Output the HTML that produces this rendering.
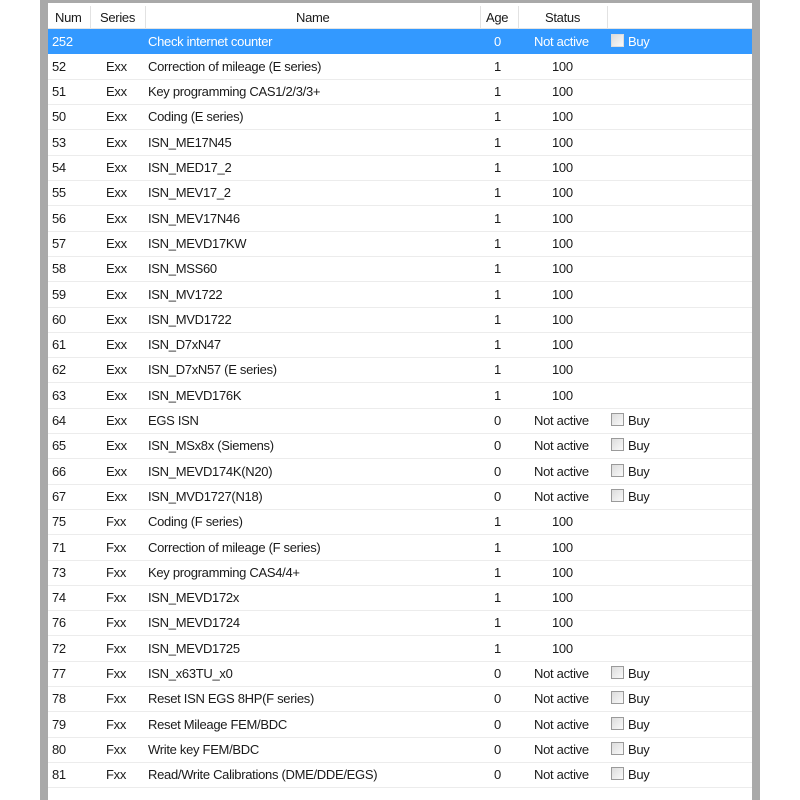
<!DOCTYPE html>
<html><head><meta charset="utf-8"><style>
body{margin:0;width:800px;height:800px;background:#fff;position:relative;overflow:hidden;font-family:"Liberation Sans",sans-serif;font-size:13px;color:#1a1a1a;letter-spacing:-0.3px}
.gl{position:absolute;left:40px;top:0;width:8px;height:800px;background:#a9a9a9}
.gr{position:absolute;left:752px;top:0;width:8px;height:800px;background:#a9a9a9}
.gt{position:absolute;left:40px;top:0;width:720px;height:3px;background:#a9a9a9}
.hdr{position:absolute;left:48px;top:3px;width:704px;height:25px;background:#fff;border-bottom:1px solid #e4e4e4}
.hs{position:absolute;top:3px;width:1px;height:22px;background:#e2e2e2}
.ht{position:absolute;top:7px}
.row{position:absolute;left:48px;width:704px;height:25px;border-bottom:1px solid #ececec}
.row span{position:absolute;top:5px;white-space:nowrap}
.sel{background:#3399ff;color:#fff;border-bottom:none}
.cb{position:absolute;left:563px;top:5px;width:11px;height:11px;border:1px solid #9a9a9a;background:linear-gradient(135deg,#dcdcdc,#fafafa)}
.sel .cb{border-color:#ddd}
</style></head><body>
<div class="gt"></div><div class="gl"></div><div class="gr"></div>
<div class="hdr">
<span class="ht" style="left:7px">Num</span>
<div class="hs" style="left:42px"></div>
<span class="ht" style="left:52px">Series</span>
<div class="hs" style="left:97px"></div>
<span class="ht" style="left:248px">Name</span>
<div class="hs" style="left:432px"></div>
<span class="ht" style="left:438px">Age</span>
<div class="hs" style="left:470px"></div>
<span class="ht" style="left:497px">Status</span>
<div class="hs" style="left:559px"></div>
</div>
<div id="rows"></div>
<script>
var d=[["252","","Check internet counter","0",0],
["52","Exx","Correction of mileage (E series)","1",1],
["51","Exx","Key programming CAS1/2/3/3+","1",1],
["50","Exx","Coding (E series)","1",1],
["53","Exx","ISN_ME17N45","1",1],
["54","Exx","ISN_MED17_2","1",1],
["55","Exx","ISN_MEV17_2","1",1],
["56","Exx","ISN_MEV17N46","1",1],
["57","Exx","ISN_MEVD17KW","1",1],
["58","Exx","ISN_MSS60","1",1],
["59","Exx","ISN_MV1722","1",1],
["60","Exx","ISN_MVD1722","1",1],
["61","Exx","ISN_D7xN47","1",1],
["62","Exx","ISN_D7xN57 (E series)","1",1],
["63","Exx","ISN_MEVD176K","1",1],
["64","Exx","EGS ISN","0",0],
["65","Exx","ISN_MSx8x (Siemens)","0",0],
["66","Exx","ISN_MEVD174K(N20)","0",0],
["67","Exx","ISN_MVD1727(N18)","0",0],
["75","Fxx","Coding (F series)","1",1],
["71","Fxx","Correction of mileage (F series)","1",1],
["73","Fxx","Key programming CAS4/4+","1",1],
["74","Fxx","ISN_MEVD172x","1",1],
["76","Fxx","ISN_MEVD1724","1",1],
["72","Fxx","ISN_MEVD1725","1",1],
["77","Fxx","ISN_x63TU_x0","0",0],
["78","Fxx","Reset ISN EGS 8HP(F series)","0",0],
["79","Fxx","Reset Mileage FEM/BDC","0",0],
["80","Fxx","Write key FEM/BDC","0",0],
["81","Fxx","Read/Write Calibrations (DME/DDE/EGS)","0",0]];
var h="";
d.forEach(function(r,i){
var t=28.5+25.3*i;
h+='<div class="row'+(i==0?' sel':'')+'" style="top:'+t+'px">'+
'<span style="left:4px">'+r[0]+'</span>'+
'<span style="left:58px">'+r[1]+'</span>'+
'<span style="left:100px">'+r[2]+'</span>'+
'<span style="left:446px">'+r[3]+'</span>'+
(r[4]?'<span style="left:504px">100</span>':'<span style="left:486px">Not active</span><div class="cb"></div><span style="left:580px">Buy</span>')+
'</div>';});
document.getElementById('rows').innerHTML=h;
</script>
</body></html>
